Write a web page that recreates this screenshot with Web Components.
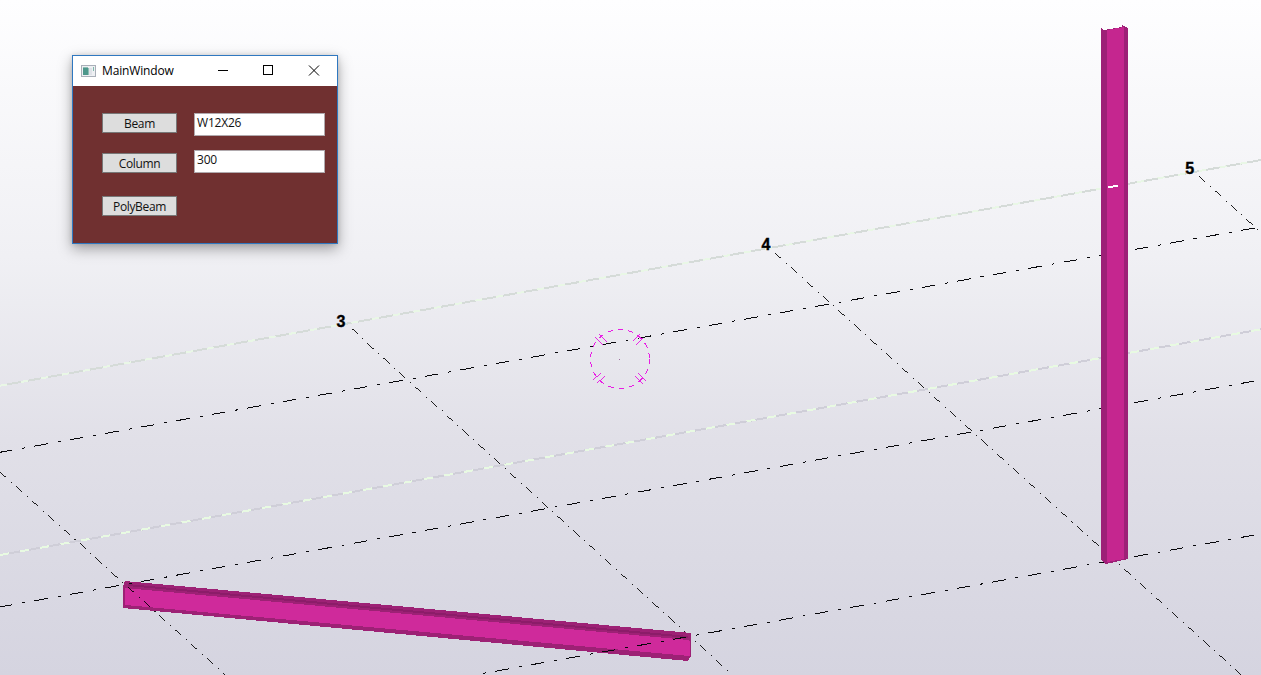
<!DOCTYPE html>
<html lang="en">
<head>
<meta charset="utf-8">
<title>MainWindow</title>
<style>
html,body{margin:0;height:100%;overflow:hidden}
body{font-family:"Open Sans","Noto Sans",sans-serif}
</style>
</head>
<body>
<model-view>
  <tool-window heading="MainWindow">
    <form-row><push-button>Beam</push-button><text-box>W12X26</text-box></form-row>
    <form-row><push-button>Column</push-button><text-box>300</text-box></form-row>
    <form-row><push-button>PolyBeam</push-button></form-row>
  </tool-window>
</model-view>
<script>
const define = (name, html) => {
  const t = document.createElement('template');
  t.innerHTML = html;
  customElements.define(name, class extends HTMLElement {
    constructor() {
      super();
      this.attachShadow({ mode: 'open' }).append(t.content.cloneNode(true));
    }
    connectedCallback() {
      const h = this.shadowRoot.querySelector('.heading');
      if (h) h.textContent = this.getAttribute('heading');
    }
  });
};

define('model-scene', `
<style>
:host{display:block;width:1261px;height:675px}
svg{display:block}
text{font:bold 16px "Liberation Sans",Arial,sans-serif;fill:#000;stroke:#000;stroke-width:.35px}
.x{stroke:#08080c;stroke-dasharray:13.7 10 3 9.36;fill:none}
.d{stroke:#000;stroke-width:.88;stroke-dasharray:8.6 6 1.4 5.4;fill:none}
.m{stroke:#e81ce4;fill:none}
.h{stroke-width:.95}
</style>
<svg width="1261" height="675" viewBox="0 0 1261 675" shape-rendering="crispEdges">
  <g fill="none" stroke-width="2">
    <path d="M0 385.7L1261 160" stroke="#d5dbd8"/>
    <path d="M0 385.7L1261 160" stroke="#e9f7e6" stroke-dasharray="7 14"/>
    <path d="M0 555L1261 329.3" stroke="#cfced8"/>
    <path d="M0 555L1261 329.3" stroke="#e8fae2" stroke-dasharray="9 11.5"/>
  </g>
  <path class="x" d="M-1.2 452.5L1254.7 228"/>
  <path class="d" d="M0 472L226 675.5"/>
  <path class="d" d="M351.5 329L733 675.5"/>
  <path class="d" d="M775 253L1242 675.5"/>
  <path class="d" d="M1199 176L1261 232.5"/>
  <g>
    <path fill="#9d2175" d="M125 581L691 633V656L688 661L123 608V586Z"/>
    <path fill="#8c1c69" d="M128 584L688 636V638L128 586Z"/>
    <path fill="#cf2a9b" d="M125 588L688 640L690 641V656L125 605Z"/>
  </g>
  <path class="x" d="M-1.2 607.2L1254.7 381"/>
  <path class="x" d="M459.8 677.6L1254.7 535"/>
  <path class="d" d="M128 587L158 614"/>
  <path fill="#9d2077" d="M1101 28L1104 30L1122 27V25L1128 28V559L1106 564L1101 560Z"/>
  <path fill="#c5268f" d="M1107 30L1124 27V559L1107 562Z"/>
  <path d="M1108 187.500L1118 185.500" stroke="#fff" stroke-width="2"/>
  <circle class="m" cx="620" cy="359" r="29.5" stroke-dasharray="5.500 5"/>
  <path class="m h" d="M595.700 337.300l8 8M599.300 334l8 8M633.300 340.700l7-7M636.300 344.700l7-7M593.300 380l8-7.500M597 383.300l8-7.500M635.300 376l7.500 7.500M638 372.700l8 8"/>
  <path d="M619 359.500h1" stroke="#a070a0"/>
  <g shape-rendering="auto"><text x="336.500" y="327">3</text><text x="761.500" y="250">4</text><text x="1185.300" y="174">5</text></g>
</svg>`);

define('model-view', `
<style>
:host{display:grid;width:1261px;height:675px;overflow:hidden;background:linear-gradient(#fefeff 0,#f0f0f4 38%,#e1e0e8 65%,#d5d4e0 100%)}
model-scene{grid-area:1/1}
::slotted(*){grid-area:1/1}
</style>
<model-scene></model-scene><slot></slot>`);

define('tool-window', `
<style>
:host{display:flex;flex-direction:column;box-sizing:border-box;width:266px;height:189px;margin:55px 0 0 72px;padding:1px;background:#2f78c0;box-shadow:0 5px 13px rgba(0,0,0,.34),0 0 5px rgba(0,0,0,.12);position:relative}
header{display:flex;align-items:center;height:30px;background:#fff;flex:none}
.icon{margin-left:8px}
.heading{font-size:12px;line-height:16px;color:#000;margin:-1px 0 0 6px;flex:1;letter-spacing:-.16px}
main{display:flex;flex-direction:column;flex:1;background:#703030;padding:27px 0 0 29px}
</style>
<header>
 <svg class="icon" width="15" height="14" viewBox="0 0 15 14" shape-rendering="crispEdges"><path fill="#eef0f3" stroke="#a9afb8" d="M.5 1.500h14v11H.5z"/><path fill="#4d978b" d="M2 4h5v7H2z"/><path fill="#8dbdb4" d="M7 4h1v7H7zM2 3h5v1H2z"/><path fill="#dfe2e8" d="M8 4h3v7H8z"/><path fill="#7fb8aa" d="M12 3h1v4h-1z"/></svg>
 <span class="heading"></span>
 <svg width="120" height="30" viewBox="0 0 120 30" fill="none" stroke="#000"><path d="M1 14.500h10M46.500 9.500h9v9h-9z" shape-rendering="crispEdges"/><path d="M92 9.500l10 10M102 9.500l-10 10"/></svg>
</header>
<main><slot></slot></main>`);

define('form-row', `
<style>
:host{display:flex;gap:17px;height:37px;align-items:flex-start}
:host(:nth-child(2)) ::slotted(push-button){margin-top:3px}
:host(:nth-child(3)) ::slotted(push-button){margin-top:9px}
</style><slot></slot>`);

define('push-button', `
<style>
:host{display:flex;align-items:center;justify-content:center;box-sizing:border-box;width:75px;height:20px;background:#ddd;border:1px solid #777;font-size:12px;letter-spacing:-.35px;color:#111}
</style><slot></slot>`);

define('text-box', `
<style>
:host{display:block;box-sizing:border-box;width:131px;height:23px;background:#fff;border:1px solid #b0a9ad;font-size:12px;letter-spacing:-.2px;line-height:17px;padding-left:2px;color:#111}
</style><slot></slot>`);
</script>
</body>
</html>
